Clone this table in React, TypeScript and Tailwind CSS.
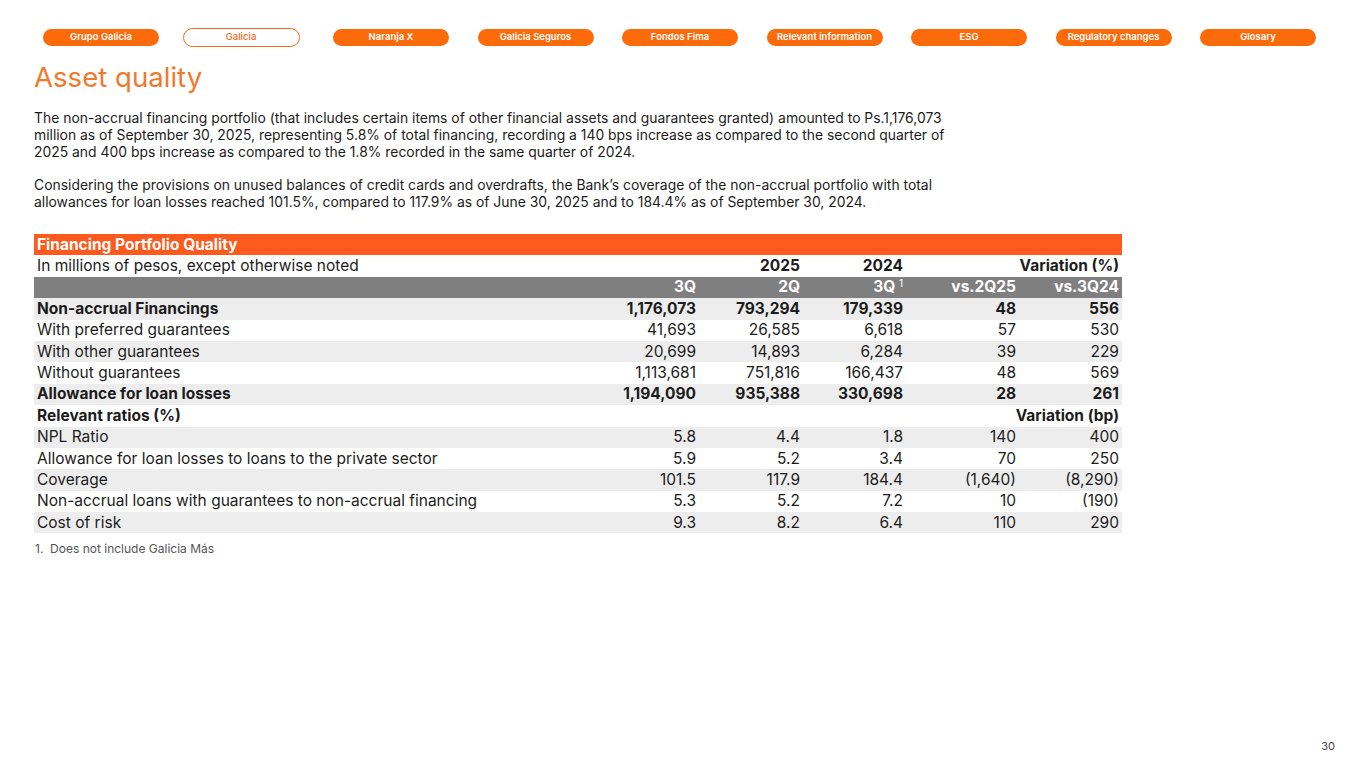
const tabs = [
  'Grupo Galicia',
  'Galicia',
  'Naranja X',
  'Galicia Seguros',
  'Fondos Fima',
  'Relevant information',
  'ESG',
  'Regulatory changes',
  'Glosary',
]

type Row = {
  label: string
  values: string[]
  bold?: boolean
  shade?: boolean
}

const rows: Row[] = [
  { label: 'Non-accrual Financings', values: ['1,176,073', '793,294', '179,339', '48', '556'], bold: true, shade: true },
  { label: 'With preferred guarantees', values: ['41,693', '26,585', '6,618', '57', '530'] },
  { label: 'With other guarantees', values: ['20,699', '14,893', '6,284', '39', '229'], shade: true },
  { label: 'Without guarantees', values: ['1,113,681', '751,816', '166,437', '48', '569'] },
  { label: 'Allowance for loan losses', values: ['1,194,090', '935,388', '330,698', '28', '261'], bold: true, shade: true },
  { label: 'Relevant ratios (%)', values: [], bold: true },
  { label: 'NPL Ratio', values: ['5.8', '4.4', '1.8', '140', '400'], shade: true },
  { label: 'Allowance for loan losses to loans to the private sector', values: ['5.9', '5.2', '3.4', '70', '250'] },
  { label: 'Coverage', values: ['101.5', '117.9', '184.4', '(1,640)', '(8,290)'], shade: true },
  { label: 'Non-accrual loans with guarantees to non-accrual financing', values: ['5.3', '5.2', '7.2', '10', '(190)'] },
  { label: 'Cost of risk', values: ['9.3', '8.2', '6.4', '110', '290'], shade: true },
]

const grid = 'grid grid-cols-[1fr_104px_104px_103px_113px_103px] items-center h-[21.4px] px-[3px]'

export default function App() {
  return (
    <div className="flex h-[768px] w-[1365px] flex-col bg-white font-['Inter',sans-serif] text-[#1c1c1c]">
      <div className="flex items-center gap-[28.5px] pl-[43px] pt-[28px]">
        {tabs.map((t) =>
          t === 'Galicia' ? (
            <div
              key={t}
              className="-ml-[5px] mr-[5px] flex h-[19px] w-[117px] items-center justify-center rounded-full border border-[#f26a1b] bg-white text-[9.5px] font-medium text-[#f26a1b]"
            >
              {t}
            </div>
          ) : (
            <div
              key={t}
              className="flex h-[17px] w-[116px] items-center justify-center rounded-full bg-[#fd6a0a] text-[9.5px] font-semibold text-white"
            >
              {t}
            </div>
          ),
        )}
      </div>

      <h1 className="ml-[34px] mt-[13px] text-[27.6px] leading-[34px] text-[#f07a2c]">Asset quality</h1>

      <div className="ml-[34px] mt-[16px] w-[920px] text-[13.9px] leading-[17px]">
        <p>
          The non-accrual financing portfolio (that includes certain items of other financial assets and guarantees
          granted) amounted to Ps.1,176,073 million as of September 30, 2025, representing 5.8% of total financing,
          recording a 140 bps increase as compared to the second quarter of 2025 and 400 bps increase as compared to the
          1.8% recorded in the same quarter of 2024.
        </p>
        <p className="mt-[16px]">
          Considering the provisions on unused balances of credit cards and overdrafts, the Bank’s coverage of the
          non-accrual portfolio with total allowances for loan losses reached 101.5%, compared to 117.9% as of June 30,
          2025 and to 184.4% as of September 30, 2024.
        </p>
      </div>

      <div className="ml-[34px] mt-[23px] w-[1088px] text-[15.5px] leading-[20px]">
        <div className="flex h-[21.4px] items-center bg-[#fe5a1d] px-[3px] text-[15.5px] font-bold text-white">
          Financing Portfolio Quality
        </div>
        <div className={grid}>
          <span>In millions of pesos, except otherwise noted</span>
          <span></span>
          <span className="text-right font-bold">2025</span>
          <span className="text-right font-bold">2024</span>
          <span className="col-span-2 text-right font-bold">Variation (%)</span>
        </div>
        <div className={grid + ' bg-[#7f7f7f] font-bold text-white'}>
          <span></span>
          <span className="text-right">3Q</span>
          <span className="text-right">2Q</span>
          <span className="text-right">
            3Q <sup className="text-[10px] font-normal">1</sup>
          </span>
          <span className="text-right">vs.2Q25</span>
          <span className="text-right">vs.3Q24</span>
        </div>
        {rows.map((r) => (
          <div key={r.label} className={grid + (r.shade ? ' bg-[#ededed]' : '') + (r.bold ? ' font-bold' : '')}>
            <span className="whitespace-nowrap">{r.label}</span>
            {r.values.length === 0 ? (
              <span className="col-span-5 text-right">Variation (bp)</span>
            ) : (
              r.values.map((v, i) => (
                <span key={i} className="text-right">
                  {v}
                </span>
              ))
            )}
          </div>
        ))}
        <p className="mt-[6px] pl-[1px] text-[12px] text-[#555]">1.&nbsp; Does not include Galicia Más</p>
      </div>

      <div className="mb-[14px] mr-[30px] mt-auto self-end text-[11px] text-[#444]">30</div>
    </div>
  )
}
